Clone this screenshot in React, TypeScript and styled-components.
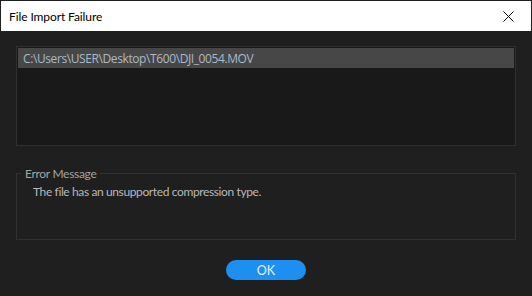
import styled, { createGlobalStyle } from 'styled-components'

const GlobalStyle = createGlobalStyle`
  html, body {
    margin: 0;
    padding: 0;
    background: #1f1f1f;
  }
  * {
    box-sizing: border-box;
  }
`;

const Window = styled.div`
  width: 532px;
  height: 296px;
  display: flex;
  flex-direction: column;
  border: 1px solid #202020;
  background: #1f1f1f;
  font-family: Lato, "Open Sans", sans-serif;
`;

const TitleBar = styled.div`
  height: 30px;
  display: flex;
  align-items: center;
  justify-content: space-between;
  background: #ffffff;
  padding-left: 8px;
`;

const Title = styled.span`
  font-family: Lato, "Noto Sans", sans-serif;
  font-size: 12px;
  letter-spacing: -0.1px;
  color: #000;
`;

const CloseButton = styled.div`
  width: 46px;
  height: 30px;
  display: flex;
  align-items: center;
  justify-content: center;
`;

const Body = styled.div`
  flex: 1;
  display: flex;
  flex-direction: column;
  padding: 15px 15px 0 15px;
`;

const FileList = styled.div`
  height: 100px;
  border: 1px solid #2f2f2f;
  background: #191919;
  padding: 1px;
`;

const FileRow = styled.div<{ selected?: boolean }>`
  height: 20px;
  display: flex;
  align-items: center;
  padding-left: 5px;
  background: ${p => (p.selected ? '#474747' : 'transparent')};
  color: #aab9c6;
  font-family: "Open Sans", sans-serif;
  font-size: 12px;
  letter-spacing: -0.4px;
`;

const MessageBox = styled.fieldset`
  margin: 20px 0 0 0;
  height: 74px;
  border: 1px solid #313131;
  padding: 0 0 0 16px;
`;

const Legend = styled.legend`
  padding: 0 4px;
  margin-left: -12px;
  color: #a3a3a3;
  font-size: 12px;
  letter-spacing: -0.3px;
`;

const MessageText = styled.div`
  margin-top: 3px;
  color: #b9b9b9;
  font-size: 12px;
  letter-spacing: -0.38px;
`;

const Footer = styled.div`
  display: flex;
  justify-content: center;
  padding-top: 20px;
`;

const OkButton = styled.button`
  width: 80px;
  height: 20px;
  border: none;
  border-radius: 10px;
  background: #1c8ff1;
  color: #e8f2fc;
  font-family: Lato, "Open Sans", sans-serif;
  font-size: 12.5px;
  padding: 0;
`;

const CloseIcon = () => (
  <svg width="11" height="11" viewBox="0 0 11 11">
    <path d="M0.5 0.5 L10.5 10.5 M10.5 0.5 L0.5 10.5" stroke="#000" strokeWidth="1" fill="none" />
  </svg>
);

const App = () => {
  return (
    <>
      <GlobalStyle />
      <Window>
        <TitleBar>
          <Title>File Import Failure</Title>
          <CloseButton>
            <CloseIcon />
          </CloseButton>
        </TitleBar>
        <Body>
          <FileList>
            <FileRow selected>C:\Users\USER\Desktop\T600\DJI_0054.MOV</FileRow>
          </FileList>
          <MessageBox>
            <Legend>Error Message</Legend>
            <MessageText>The file has an unsupported compression type.</MessageText>
          </MessageBox>
          <Footer>
            <OkButton>OK</OkButton>
          </Footer>
        </Body>
      </Window>
    </>
  );
};

export default App;
